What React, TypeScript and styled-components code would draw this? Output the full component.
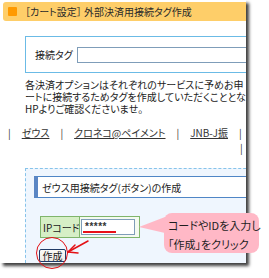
import React from "react";
import styled, { createGlobalStyle } from "styled-components";

const Global = createGlobalStyle`
  html, body { margin: 0; padding: 0; background: #ffffff; }
  body {
    font-family: "Noto Sans CJK JP", "Noto Sans", sans-serif;
    color: #222;
    font-feature-settings: "palt";
  }
`;

const Page = styled.div`
  position: relative;
  width: 269px;
  height: 278px;
  overflow: hidden;
`;

const Card = styled.div`
  width: 246px;
  height: 263px;
  background: #ffffff;
  overflow: hidden;
  box-shadow: 3px 3px 3px rgba(0, 0, 0, 0.75);
  display: flex;
  flex-direction: column;
`;

const TitleBar = styled.div`
  margin: 2px -6px 0 3px;
  height: 19px;
  flex: none;
  background: #fece69;
  border-radius: 3px;
  display: flex;
  align-items: center;
  gap: 8px;
  padding-left: 5px;
  font-size: 10px;
  line-height: 19px;
  color: #2a2a2a;
  white-space: nowrap;
`;

const Square = styled.span`
  width: 9px;
  height: 9px;
  border-radius: 1px;
  background: #ff9a00;
  flex: none;
`;

const TagPanel = styled.div`
  margin: 15px -10px 0 25px;
  height: 37px;
  box-sizing: border-box;
  border: 1px solid #6bbbe6;
  display: flex;
  align-items: center;
  padding-left: 9px;
  gap: 4px;
  flex: none;
`;

const Label = styled.span`
  font-size: 10px;
  white-space: nowrap;
`;

const TextInput = styled.div`
  flex: 1;
  height: 16px;
  box-sizing: border-box;
  border: 1px solid #7f9db9;
  background: #fff;
`;

const Paragraph = styled.p`
  margin: 6px 0 0 25px;
  font-size: 10px;
  line-height: 12px;
  white-space: nowrap;
  flex: none;
`;

const LinkRow = styled.div`
  margin-top: 12px;
  padding-left: ${(p: { $indent: number }) => p.$indent}px;
  display: flex;
  gap: 11px;
  font-size: 10px;
  line-height: 12px;
  white-space: nowrap;
  flex: none;
`;

const Sep = styled.span`
  color: #333;
`;

const Link = styled.span`
  text-decoration: underline;
  color: #333;
`;

const LinkRow2 = styled(LinkRow)`
  margin-top: 3px;
`;

const Section = styled.div`
  margin: 14px -20px 0 25px;
  flex: 1;
  background: #eff6fe;
  border-top: 1px dashed #86c3ea;
  border-left: 1px dashed #86c3ea;
  padding: 7px 0 0 8px;
  display: flex;
  flex-direction: column;
  align-items: flex-start;
`;

const Heading = styled.div`
  align-self: stretch;
  height: 22px;
  box-sizing: border-box;
  border: 1px solid #4f86c6;
  border-left: 4px solid #5b86c4;
  background: #ffffff;
  display: flex;
  align-items: center;
  padding-left: 4px;
  font-size: 10px;
  white-space: nowrap;
`;

const IpBox = styled.div`
  margin: 18px 0 0 6px;
  display: flex;
  height: 22px;
  box-sizing: border-box;
  border: 1px solid #7fb56b;
`;

const IpLabel = styled.div`
  width: 36px;
  background: #d6efc6;
  border-right: 1px solid #7fb56b;
  display: flex;
  align-items: center;
  padding-left: 2px;
  font-size: 10px;
  white-space: nowrap;
`;

const IpCell = styled.div`
  width: 59px;
  background: #f4faf0;
  padding: 2px 4px 2px 1px;
  box-sizing: border-box;
`;

const IpInput = styled.div`
  height: 16px;
  box-sizing: border-box;
  border: 1px solid #7f9db9;
  background: #fff;
  position: relative;
  font-family: "Liberation Sans", sans-serif;
  font-size: 10px;
  font-weight: bold;
  line-height: 13px;
  padding-left: 3px;
  letter-spacing: 0.5px;
  color: #333;
`;

const RedUnderline = styled.span`
  position: absolute;
  left: 1px;
  top: 11px;
  width: 33px;
  height: 2px;
  background: #e8101a;
`;

const CreateButton = styled.div`
  margin: 11px 0 0 5px;
  width: 27px;
  height: 13px;
  box-sizing: border-box;
  border: 1px solid #1f3a66;
  border-radius: 2px;
  background: linear-gradient(#fbfbf8, #ecebe4);
  font-size: 10px;
  line-height: 11px;
  text-align: center;
`;

const Circle = styled.div`
  position: absolute;
  left: 36px;
  top: 237px;
  width: 32px;
  height: 32px;
  box-sizing: border-box;
  border: 1.5px solid #e31015;
  border-radius: 50%;
`;

const Arrow = styled.svg`
  position: absolute;
  left: 64px;
  top: 236px;
`;

const Bubble = styled.div`
  position: absolute;
  left: 164px;
  top: 213px;
  width: 95px;
  height: 40px;
  box-sizing: border-box;
  background: #ffb8c6;
  border-radius: 8px;
  padding: 3px 0 0 4px;
  font-size: 11px;
  line-height: 19px;
  color: #1e1e1e;
  white-space: nowrap;
`;

const Tail = styled.svg`
  position: absolute;
  left: -25px;
  top: 4px;
`;

export default function App() {
  return (
    <Page>
      <Global />
      <Card>
        <TitleBar>
          <Square />
          <span>［カート設定］ 外部決済用接続タグ作成</span>
        </TitleBar>
        <TagPanel>
          <Label>接続タグ</Label>
          <TextInput />
        </TagPanel>
        <Paragraph>
          各決済オプションはそれぞれのサービスに予めお申
          <br />
          ートに接続するためタグを作成していただくこととなり
          <br />
          HPよりご確認くださいませ。
        </Paragraph>
        <LinkRow $indent={8}>
          <Sep>|</Sep>
          <Link>ゼウス</Link>
          <Sep>|</Sep>
          <Link>クロネコ@ペイメント</Link>
          <Sep>|</Sep>
          <Link>JNB-J振</Link>
          <Sep>|</Sep>
          <Link>&nbsp;&nbsp;</Link>
        </LinkRow>
        <LinkRow2 $indent={240}>
          <Sep>|</Sep>
        </LinkRow2>
        <Section>
          <Heading>ゼウス用接続タグ(ボタン)の作成</Heading>
          <IpBox>
            <IpLabel>IPコード</IpLabel>
            <IpCell>
              <IpInput>
                *****
                <RedUnderline />
              </IpInput>
            </IpCell>
          </IpBox>
          <CreateButton>作成</CreateButton>
        </Section>
      </Card>
      <Circle />
      <Arrow width="28" height="20" viewBox="0 0 28 20">
        <g stroke="#e31015" strokeWidth="1.5" fill="none" strokeLinecap="round">
          <line x1="4" y1="16" x2="24" y2="5" />
          <line x1="4" y1="16" x2="11" y2="9" />
          <line x1="4" y1="16" x2="14" y2="17" />
        </g>
      </Arrow>
      <Bubble>
        <Tail width="26" height="20" viewBox="0 0 26 20">
          <polygon points="26,0 0,10 26,16" fill="#ffb8c6" />
        </Tail>
        コードやIDを入力し
        <br />
        「作成」をクリック
      </Bubble>
    </Page>
  );
}
